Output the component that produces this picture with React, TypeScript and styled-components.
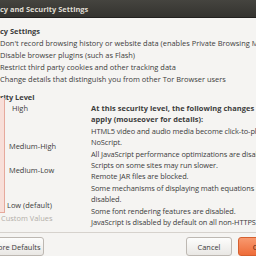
import React from 'react';
import styled, { createGlobalStyle } from 'styled-components';

const GlobalStyle = createGlobalStyle`
    html, body {
        margin: 0;
        padding: 0;
        background: #f5f4f2;
    }
    body {
        font-family: 'Open Sans', 'Liberation Sans', sans-serif;
        font-size: 7.45px;
        color: #3c3c3c;
    }
`;

const privacyOptions = [
    "Don't record browsing history or website data (enables Private Browsing Mode)",
    'Disable browser plugins (such as Flash)',
    'Restrict third party cookies and other tracking data',
    'Change details that distinguish you from other Tor Browser users',
];

const levels = [
    { label: 'High', indent: 12, top: 4.5 },
    { label: 'Medium-High', indent: 9, top: 27 },
    { label: 'Medium-Low', indent: 9, top: 13 },
    { label: 'Low (default)', indent: 7, top: 24.5 },
];

const effects = [
    ['HTML5 video and audio media become click-to-play via', 'NoScript.'],
    ['All JavaScript performance optimizations are disabled.', 'Scripts on some sites may run slower.'],
    ['Remote JAR files are blocked.'],
    ['Some mechanisms of displaying math equations are', 'disabled.'],
    ['Some font rendering features are disabled.'],
    ['JavaScript is disabled by default on all non-HTTPS sites.'],
];

export default function App() {
    return (
        <>
            <GlobalStyle />
            <Window>
                <TitleBar>cy and Security Settings</TitleBar>
                <Content>
                    <SectionTitle>cy Settings</SectionTitle>
                    {privacyOptions.map((option) => (
                        <OptionRow key={option}>{option}</OptionRow>
                    ))}
                    <SectionTitle $spaced>rity Level</SectionTitle>
                    <LevelGrid>
                        <SliderColumn>
                            <SliderBody>
                                <Track />
                                <Marks>
                                    {levels.map((level) => (
                                        <Mark key={level.label} $indent={level.indent} $top={level.top}>
                                            {level.label}
                                        </Mark>
                                    ))}
                                </Marks>
                            </SliderBody>
                            <CustomLabel>Custom Values</CustomLabel>
                        </SliderColumn>
                        <Description>
                            <Heading>
                                At this security level, the following changes
                                <br />
                                apply (mouseover for details):
                            </Heading>
                            {effects.map((lines) => (
                                <Effect key={lines[0]}>
                                    {lines.map((line) => (
                                        <div key={line}>{line}</div>
                                    ))}
                                </Effect>
                            ))}
                        </Description>
                    </LevelGrid>
                </Content>
                <ButtonBar>
                    <Button>ore Defaults</Button>
                    <Spacer />
                    <Button $width={46}>Cancel</Button>
                    <Button $primary $width={40}>
                        OK
                    </Button>
                </ButtonBar>
            </Window>
        </>
    );
}

const Window = styled.div`
    width: 256px;
    height: 256px;
    overflow: hidden;
    display: flex;
    flex-direction: column;
    background: #f5f4f2;
`;

const TitleBar = styled.div`
    height: 17px;
    flex-shrink: 0;
    display: flex;
    align-items: center;
    background: linear-gradient(#45443f, #34332f);
    border-bottom: 1px solid #22211f;
    color: #dfdbd2;
    font-weight: bold;
    white-space: nowrap;
`;

const Content = styled.div`
    padding-top: 7px;
    flex: 1;
    white-space: nowrap;
`;

const SectionTitle = styled.div<{ $spaced?: boolean }>`
    font-weight: bold;
    line-height: ${(p) => (p.$spaced ? '10px' : '12px')};
    margin-top: ${(p) => (p.$spaced ? '7px' : '0')};
`;

const OptionRow = styled.div`
    line-height: 12px;
`;

const LevelGrid = styled.div`
    display: grid;
    grid-template-columns: 91px 1fr;
    margin-top: -4px;
`;

const SliderColumn = styled.div`
    display: flex;
    flex-direction: column;
`;

const SliderBody = styled.div`
    display: flex;
    height: 115px;
`;

const Track = styled.div`
    width: 5px;
    height: 100%;
    background: #f8dfd9;
    border-right: 1px solid #e6a99c;
    border-bottom: 1px solid #e6a99c;
    box-sizing: border-box;
`;

const Marks = styled.div`
    display: flex;
    flex-direction: column;
`;

const Mark = styled.div<{ $indent: number; $top: number }>`
    line-height: 11px;
    margin-left: ${(p) => p.$indent - 5}px;
    margin-top: ${(p) => p.$top}px;
`;

const CustomLabel = styled.div`
    color: #b3aea8;
    line-height: 10px;
    margin-left: 1px;
`;

const Description = styled.div`
    padding-top: 5px;
    line-height: 11.4px;
`;

const Heading = styled.div`
    font-weight: bold;
    letter-spacing: 0.05px;
`;

const Effect = styled.div`
    letter-spacing: -0.1px;
`;

const ButtonBar = styled.div`
    flex-shrink: 0;
    display: flex;
    align-items: flex-start;
    gap: 6px;
    height: 24px;
    padding-top: 4px;
    border-top: 1px solid #d6d2cd;
    box-sizing: border-box;
`;

const Spacer = styled.div`
    flex: 1;
`;

const Button = styled.div<{ $primary?: boolean; $width?: number }>`
    height: 19px;
    width: ${(p) => (p.$width ? `${p.$width}px` : 'auto')};
    flex-shrink: 0;
    padding: 0 ${(p) => (p.$width ? '0' : '3px 0 0')};
    margin-left: ${(p) => (p.$width ? '0' : '-3px')};
    display: flex;
    align-items: center;
    justify-content: center;
    box-sizing: border-box;
    border-radius: 3px;
    border: 1px solid ${(p) => (p.$primary ? '#d5602f' : '#bdb8b2')};
    background: ${(p) =>
        p.$primary ? 'linear-gradient(#f8996f, #ee6c39)' : 'linear-gradient(#fdfdfc, #e9e7e4)'};
    color: ${(p) => (p.$primary ? '#4a2414' : '#3c3c3c')};
    margin-right: ${(p) => (p.$primary ? '-22px' : '0')};
    white-space: nowrap;
`;
